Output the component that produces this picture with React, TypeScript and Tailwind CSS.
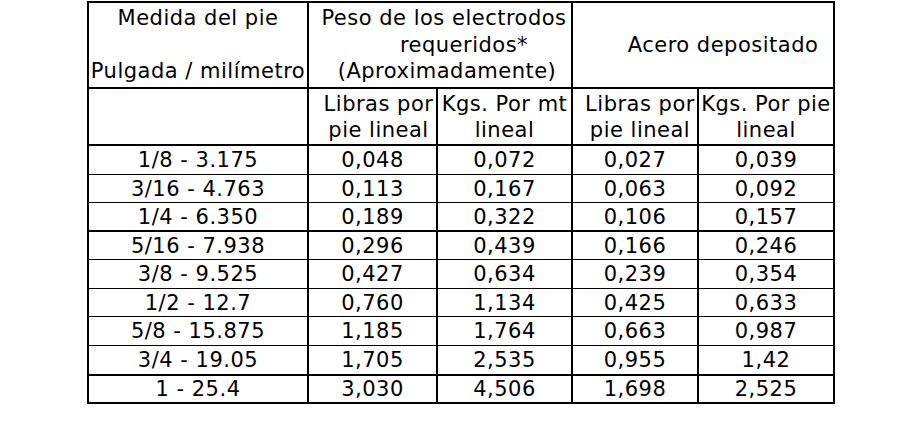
import React from "react";

const rows: string[][] = [
  ["1/8 - 3.175", "0,048", "0,072", "0,027", "0,039"],
  ["3/16 - 4.763", "0,113", "0,167", "0,063", "0,092"],
  ["1/4 - 6.350", "0,189", "0,322", "0,106", "0,157"],
  ["5/16 - 7.938", "0,296", "0,439", "0,166", "0,246"],
  ["3/8 - 9.525", "0,427", "0,634", "0,239", "0,354"],
  ["1/2 - 12.7", "0,760", "1,134", "0,425", "0,633"],
  ["5/8 - 15.875", "1,185", "1,764", "0,663", "0,987"],
  ["3/4 - 19.05", "1,705", "2,535", "0,955", "1,42"],
  ["1 - 25.4", "3,030", "4,506", "1,698", "2,525"],
];

const rowBorder = [
  "border-b",
  "border-b",
  "border-b-2",
  "border-b",
  "border-b",
  "border-b",
  "border-b",
  "border-b-2",
  "",
];

export default function App() {
  return (
    <div className="w-[920px] h-[435px] bg-white pt-[1px] pl-[87px] font-['DejaVu_Sans',sans-serif] text-[21px] tracking-[0.5px] leading-[26px] text-black">
      <div className="w-[748px] border-2 border-black grid grid-cols-[218px_129px_135px_126px_136px] grid-rows-[86px_57px_29px_28px_29px_28px_29px_28px_29px_30px_26px]">
        {/* Header row 1 */}
        <div className="border-b-2 border-black flex flex-col items-center justify-center leading-[26.5px] whitespace-nowrap">
          <div>Medida del pie</div>
          <div>&nbsp;</div>
          <div>Pulgada / milímetro</div>
        </div>
        <div className="col-span-2 border-b-2 border-l-2 border-black flex flex-col justify-center leading-[26.5px] whitespace-nowrap text-center pl-[8px]">
          <div>Peso de los electrodos</div>
          <div className="pl-[40px]">requeridos*</div>
          <div className="pl-[6px]">(Aproximadamente)</div>
        </div>
        <div className="col-span-2 border-b-2 border-l-2 border-black flex items-center justify-center whitespace-nowrap pl-[40px]">
          Acero depositado
        </div>

        {/* Header row 2 */}
        <div className="border-b-2 border-black"></div>
        <div className="border-b-2 border-l-2 border-black flex flex-col justify-center text-center whitespace-nowrap pl-[12px]">
          <div>Libras por</div>
          <div>pie lineal</div>
        </div>
        <div className="border-b-2 border-l-2 border-black flex flex-col justify-center text-center whitespace-nowrap">
          <div>Kgs. Por mt</div>
          <div>lineal</div>
        </div>
        <div className="border-b-2 border-l-2 border-black flex flex-col justify-center text-center whitespace-nowrap pl-[10px]">
          <div>Libras por</div>
          <div>pie lineal</div>
        </div>
        <div className="border-b-2 border-l-2 border-black flex flex-col justify-center text-center whitespace-nowrap">
          <div>Kgs. Por pie</div>
          <div>lineal</div>
        </div>

        {/* Data rows */}
        {rows.map((r, i) =>
          r.map((v, j) => (
            <div
              key={`${i}-${j}`}
              className={`${rowBorder[i]} ${j > 0 ? "border-l-2" : ""} border-black flex items-center justify-center whitespace-nowrap`}
            >
              {v}
            </div>
          ))
        )}
      </div>
    </div>
  );
}
